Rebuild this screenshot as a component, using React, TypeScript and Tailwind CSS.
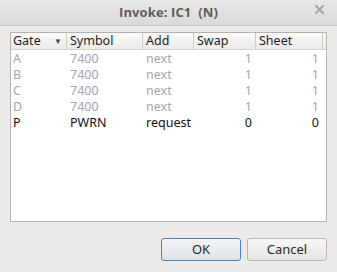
const rows = [
  { gate: 'A', symbol: '7400', add: 'next', swap: '1', sheet: '1', dim: true },
  { gate: 'B', symbol: '7400', add: 'next', swap: '1', sheet: '1', dim: true },
  { gate: 'C', symbol: '7400', add: 'next', swap: '1', sheet: '1', dim: true },
  { gate: 'D', symbol: '7400', add: 'next', swap: '1', sheet: '1', dim: true },
  { gate: 'P', symbol: 'PWRN', add: 'request', swap: '0', sheet: '0', dim: false },
]

const cols = 'grid grid-cols-[56px_76px_51px_62px_67px]'

export default function App() {
  return (
    <div className="w-[337px] h-[272px] bg-[#edebe9] flex flex-col overflow-hidden antialiased" style={{ fontFamily: '"Noto Sans", "Open Sans", sans-serif' }}>
      {/* title bar */}
      <div className="relative h-[26px] shrink-0 flex items-center justify-center bg-gradient-to-b from-[#e9e8e6] to-[#dcdad6] border-b border-[#c9c6c1]">
        <span className="text-[13px] font-bold text-[#5d5d5d] tracking-[0.1px]" style={{ fontFamily: '"Open Sans", "Noto Sans", sans-serif' }}>Invoke: IC1&nbsp; (N)</span>
        <svg className="absolute right-[13px] top-[5px]" width="9" height="9" viewBox="0 0 9 9">
          <path d="M1 1L8 8M8 1L1 8" stroke="#a5a5a5" strokeWidth="2" strokeLinecap="round" />
        </svg>
      </div>

      <div className="flex-1 flex flex-col px-[10px] pt-[6px]">
        {/* table */}
        <div className="h-[190px] border border-[#b6b2ac] bg-white text-[12.5px] leading-none">
          <div className={`${cols} h-[17px] bg-gradient-to-b from-[#fbfbfa] to-[#ecebe9] border-b border-[#d6d3cf] text-[#1d1d1d]`}>
            <div className="flex items-center justify-between pl-[2px] pr-[4px] border-r border-[#cfccc7]">
              <span>Gate</span>
              <span className="text-[8px] text-[#444]">▼</span>
            </div>
            <div className="flex items-center pl-[3px] border-r border-[#cfccc7]">Symbol</div>
            <div className="flex items-center pl-[3px] border-r border-[#cfccc7]">Add</div>
            <div className="flex items-center pl-[3px] border-r border-[#cfccc7]">Swap</div>
            <div className="flex items-center pl-[3px] border-r border-[#cfccc7]">Sheet</div>
          </div>
          <div className="pt-[1px]">
            {rows.map((r) => (
              <div key={r.gate} className={`${cols} h-[16px] items-center ${r.dim ? 'text-[#a6a6a6]' : 'text-[#111]'}`}>
                <div className="pl-[2px]">{r.gate}</div>
                <div className="pl-[3px]">{r.symbol}</div>
                <div className="pl-[3px]">{r.add}</div>
                <div className="text-right pr-[4px]">{r.swap}</div>
                <div className="text-right pr-[4px]">{r.sheet}</div>
              </div>
            ))}
          </div>
        </div>

        {/* buttons */}
        <div className="flex justify-end gap-[6px] mt-[16px] text-[13px]">
          <button className="w-[80px] h-[23px] rounded-[3px] border border-[#4a82b8] bg-gradient-to-b from-[#f3f5f7] to-[#dfe3e7] text-[#2a2a2a] flex items-center justify-center">OK</button>
          <button className="w-[80px] h-[23px] rounded-[3px] border border-[#bab6b0] bg-gradient-to-b from-[#f8f8f7] to-[#e6e4e1] text-[#2a2a2a] flex items-center justify-center">Cancel</button>
        </div>
      </div>
    </div>
  )
}
